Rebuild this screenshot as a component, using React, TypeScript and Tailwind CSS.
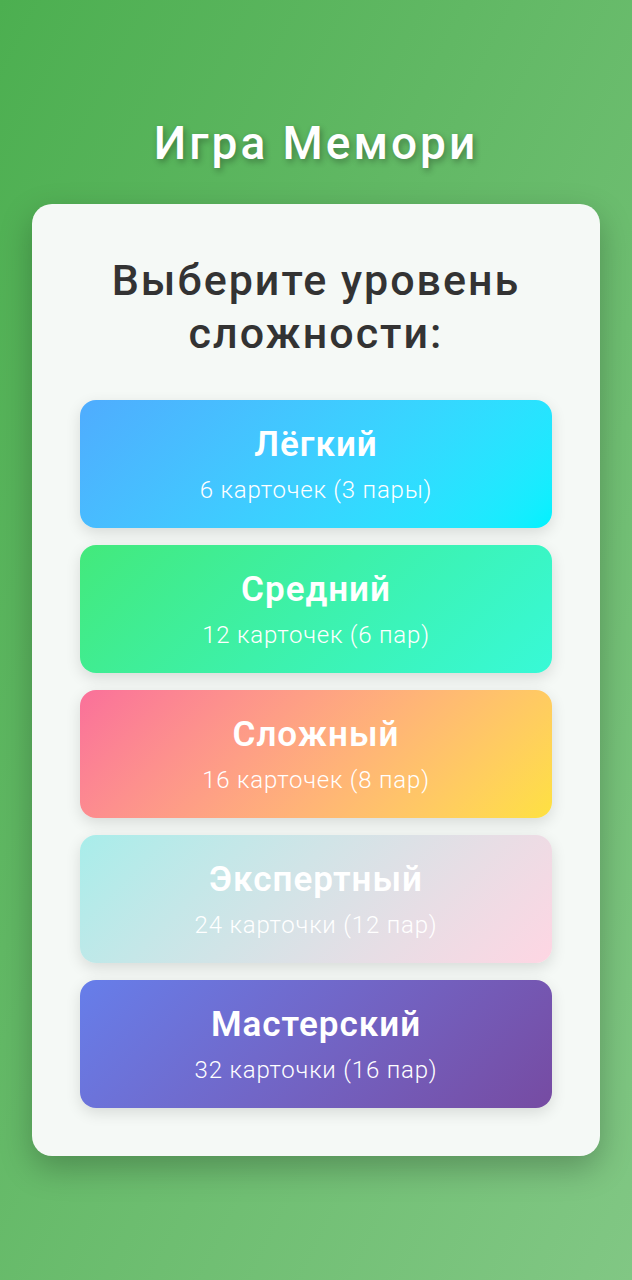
import React from 'react'

const levels = [
  { name: 'Лёгкий', info: '6 карточек (3 пары)', bg: 'bg-linear-135 from-[#4facfe] to-[#00f2fe]' },
  { name: 'Средний', info: '12 карточек (6 пар)', bg: 'bg-linear-135 from-[#43e97b] to-[#38f9d7]' },
  { name: 'Сложный', info: '16 карточек (8 пар)', bg: 'bg-linear-135 from-[#fa709a] to-[#fee140]' },
  { name: 'Экспертный', info: '24 карточки (12 пар)', bg: 'bg-linear-135 from-[#a8edea] to-[#fed6e3]' },
  { name: 'Мастерский', info: '32 карточки (16 пар)', bg: 'bg-linear-135 from-[#667eea] to-[#764ba2]' },
]

export default function App() {
  return (
    <div className="min-h-screen bg-linear-to-br from-[#4caf50] to-[#81c784] px-8 pt-[117px] pb-10 font-['Roboto','Noto_Sans',sans-serif]">
      {/* Header */}
      <h1 className="text-center text-white text-[46px] leading-[52px] tracking-[3px] font-medium mb-[35px] [text-shadow:2px_3px_6px_rgba(0,0,0,0.3)]">
        Игра Мемори
      </h1>

      {/* Level picker */}
      <div className="bg-[#f5f9f6] rounded-[20px] px-12 pt-[50px] pb-12 shadow-[0_12px_32px_rgba(0,0,0,0.25)]">
        <h2 className="text-center text-[#333333] text-[43px] leading-[53px] tracking-[2px] font-medium mb-[40px]">
          Выберите уровень сложности:
        </h2>

        <div className="flex flex-col gap-[17px]">
          {levels.map((l) => (
            <button
              key={l.name}
              className={`${l.bg} h-[128px] rounded-[16px] flex flex-col items-center justify-center text-white shadow-[0_5px_15px_rgba(0,0,0,0.12)]`}
            >
              <span className="text-[35px] leading-[40px] tracking-[1px] font-semibold mb-[11px]">{l.name}</span>
              <span className="text-[24px] leading-[28px] tracking-[0.8px] font-light">{l.info}</span>
            </button>
          ))}
        </div>
      </div>
    </div>
  )
}
